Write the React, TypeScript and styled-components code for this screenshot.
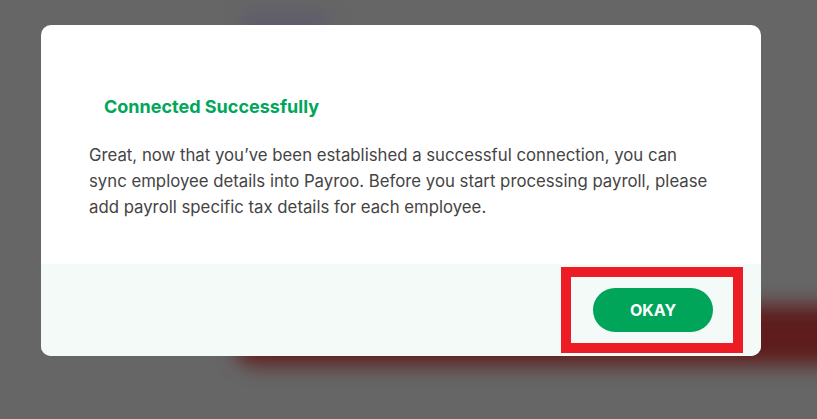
import React from 'react';
import styled, { createGlobalStyle } from 'styled-components';

const GlobalStyle = createGlobalStyle`
  html, body {
    margin: 0;
    padding: 0;
    height: 100%;
  }
  body {
    background: #666666;
    font-family: Inter, "Noto Sans", "Liberation Sans", sans-serif;
    overflow: hidden;
  }
`;

const Backdrop = styled.div`
  position: relative;
  width: 817px;
  height: 419px;
  background: #666666;
  overflow: hidden;
  padding: 25px 0 0 41px;
  box-sizing: border-box;
`;

const Glow = styled.div<{ $x: number; $y: number; $w: number; $h: number; $color: string; $blur: number }>`
  position: absolute;
  left: ${({ $x }) => $x}px;
  top: ${({ $y }) => $y}px;
  width: ${({ $w }) => $w}px;
  height: ${({ $h }) => $h}px;
  background: ${({ $color }) => $color};
  filter: blur(${({ $blur }) => $blur}px);
  border-radius: 20px;
`;

const Modal = styled.div`
  position: relative;
  width: 720px;
  height: 331px;
  background: #ffffff;
  border-radius: 10px;
  overflow: hidden;
  display: flex;
  flex-direction: column;
`;

const Content = styled.div`
  flex: 1;
  padding: 70px 48px 0 48px;
`;

const Title = styled.h2`
  margin: 0 0 23px 15px;
  color: #00a65a;
  font-size: 18px;
  font-weight: 700;
  line-height: 24px;
`;

const Text = styled.p`
  margin: 0;
  color: #444444;
  font-size: 16.75px;
  line-height: 26px;
`;

const Footer = styled.div`
  height: 92px;
  background: #f4faf8;
  display: flex;
  align-items: center;
  justify-content: flex-end;
  padding: 0 48px;
  box-sizing: border-box;
`;

const OkayButton = styled.button`
  width: 120px;
  height: 44px;
  border: none;
  border-radius: 22px;
  background: #00a559;
  color: #ffffff;
  font-family: inherit;
  font-size: 16px;
  font-weight: 700;
  cursor: pointer;
`;

const Highlight = styled.div`
  position: absolute;
  left: 561px;
  top: 267px;
  width: 182px;
  height: 86px;
  box-sizing: border-box;
  border: 10px solid #ed1c24;
  pointer-events: none;
`;

export default function App() {
  return (
    <>
      <GlobalStyle />
      <Backdrop>
        <Glow $x={240} $y={14} $w={90} $h={20} $color="#5d5a6e" $blur={10} />
        <Glow $x={235} $y={305} $w={640} $h={60} $color="#5e1c1c" $blur={10} />
        <Modal>
          <Content>
            <Title>Connected Successfully</Title>
            <Text>
              Great, now that you’ve been established a successful connection, you can
              <br />
              sync employee details into Payroo. Before you start processing payroll, please
              <br />
              add payroll specific tax details for each employee.
            </Text>
          </Content>
          <Footer>
            <OkayButton>OKAY</OkayButton>
          </Footer>
        </Modal>
        <Highlight />
      </Backdrop>
    </>
  );
}
